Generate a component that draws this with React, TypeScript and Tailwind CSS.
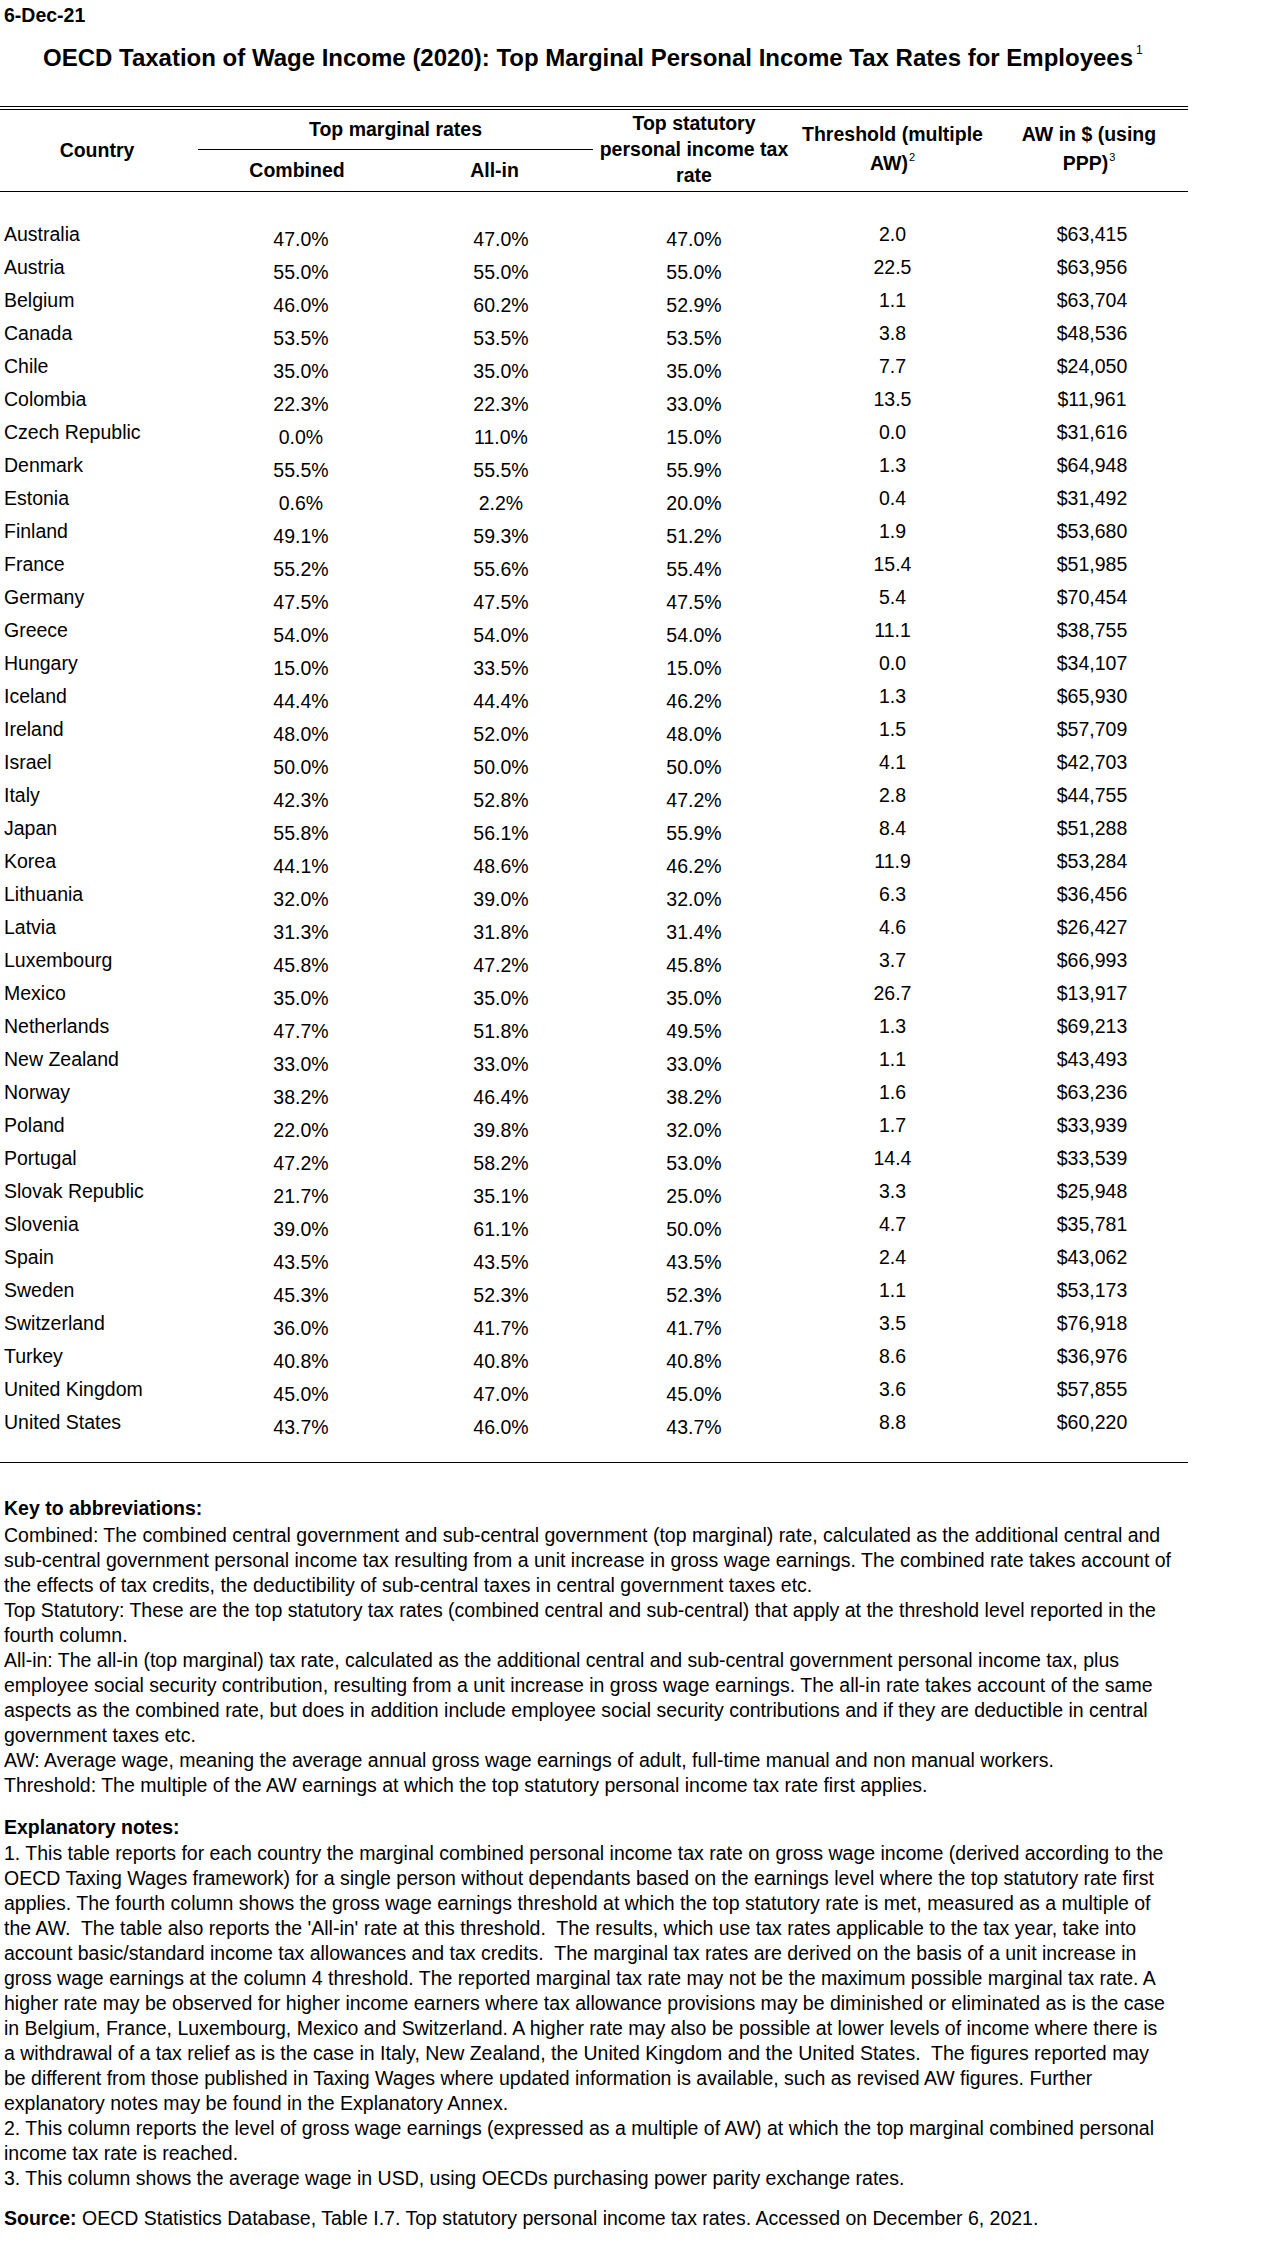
import React from "react";

type Row = [string, string, string, string, string, string];

const rows: Row[] = [
  ["Australia", "47.0%", "47.0%", "47.0%", "2.0", "$63,415"],
  ["Austria", "55.0%", "55.0%", "55.0%", "22.5", "$63,956"],
  ["Belgium", "46.0%", "60.2%", "52.9%", "1.1", "$63,704"],
  ["Canada", "53.5%", "53.5%", "53.5%", "3.8", "$48,536"],
  ["Chile", "35.0%", "35.0%", "35.0%", "7.7", "$24,050"],
  ["Colombia", "22.3%", "22.3%", "33.0%", "13.5", "$11,961"],
  ["Czech Republic", "0.0%", "11.0%", "15.0%", "0.0", "$31,616"],
  ["Denmark", "55.5%", "55.5%", "55.9%", "1.3", "$64,948"],
  ["Estonia", "0.6%", "2.2%", "20.0%", "0.4", "$31,492"],
  ["Finland", "49.1%", "59.3%", "51.2%", "1.9", "$53,680"],
  ["France", "55.2%", "55.6%", "55.4%", "15.4", "$51,985"],
  ["Germany", "47.5%", "47.5%", "47.5%", "5.4", "$70,454"],
  ["Greece", "54.0%", "54.0%", "54.0%", "11.1", "$38,755"],
  ["Hungary", "15.0%", "33.5%", "15.0%", "0.0", "$34,107"],
  ["Iceland", "44.4%", "44.4%", "46.2%", "1.3", "$65,930"],
  ["Ireland", "48.0%", "52.0%", "48.0%", "1.5", "$57,709"],
  ["Israel", "50.0%", "50.0%", "50.0%", "4.1", "$42,703"],
  ["Italy", "42.3%", "52.8%", "47.2%", "2.8", "$44,755"],
  ["Japan", "55.8%", "56.1%", "55.9%", "8.4", "$51,288"],
  ["Korea", "44.1%", "48.6%", "46.2%", "11.9", "$53,284"],
  ["Lithuania", "32.0%", "39.0%", "32.0%", "6.3", "$36,456"],
  ["Latvia", "31.3%", "31.8%", "31.4%", "4.6", "$26,427"],
  ["Luxembourg", "45.8%", "47.2%", "45.8%", "3.7", "$66,993"],
  ["Mexico", "35.0%", "35.0%", "35.0%", "26.7", "$13,917"],
  ["Netherlands", "47.7%", "51.8%", "49.5%", "1.3", "$69,213"],
  ["New Zealand", "33.0%", "33.0%", "33.0%", "1.1", "$43,493"],
  ["Norway", "38.2%", "46.4%", "38.2%", "1.6", "$63,236"],
  ["Poland", "22.0%", "39.8%", "32.0%", "1.7", "$33,939"],
  ["Portugal", "47.2%", "58.2%", "53.0%", "14.4", "$33,539"],
  ["Slovak Republic", "21.7%", "35.1%", "25.0%", "3.3", "$25,948"],
  ["Slovenia", "39.0%", "61.1%", "50.0%", "4.7", "$35,781"],
  ["Spain", "43.5%", "43.5%", "43.5%", "2.4", "$43,062"],
  ["Sweden", "45.3%", "52.3%", "52.3%", "1.1", "$53,173"],
  ["Switzerland", "36.0%", "41.7%", "41.7%", "3.5", "$76,918"],
  ["Turkey", "40.8%", "40.8%", "40.8%", "8.6", "$36,976"],
  ["United Kingdom", "45.0%", "47.0%", "45.0%", "3.6", "$57,855"],
  ["United States", "43.7%", "46.0%", "43.7%", "8.8", "$60,220"],
];

const keyLines = [
  "Combined: The combined central government and sub-central government (top marginal) rate, calculated as the additional central and",
  "sub-central government personal income tax resulting from a unit increase in gross wage earnings. The combined rate takes account of",
  "the effects of tax credits, the deductibility of sub-central taxes in central government taxes etc.",
  "Top Statutory: These are the top statutory tax rates (combined central and sub-central) that apply at the threshold level reported in the",
  "fourth column.",
  "All-in: The all-in (top marginal) tax rate, calculated as the additional central and sub-central government personal income tax, plus",
  "employee social security contribution, resulting from a unit increase in gross wage earnings. The all-in rate takes account of the same",
  "aspects as the combined rate, but does in addition include employee social security contributions and if they are deductible in central",
  "government taxes etc.",
  "AW: Average wage, meaning the average annual gross wage earnings of adult, full-time manual and non manual workers.",
  "Threshold: The multiple of the AW earnings at which the top statutory personal income tax rate first applies.",
];

const noteLines = [
  "1. This table reports for each country the marginal combined personal income tax rate on gross wage income (derived according to the",
  "OECD Taxing Wages framework) for a single person without dependants based on the earnings level where the top statutory rate first",
  "applies. The fourth column shows the gross wage earnings threshold at which the top statutory rate is met, measured as a multiple of",
  "the AW.  The table also reports the 'All-in' rate at this threshold.  The results, which use tax rates applicable to the tax year, take into",
  "account basic/standard income tax allowances and tax credits.  The marginal tax rates are derived on the basis of a unit increase in",
  "gross wage earnings at the column 4 threshold. The reported marginal tax rate may not be the maximum possible marginal tax rate. A",
  "higher rate may be observed for higher income earners where tax allowance provisions may be diminished or eliminated as is the case",
  "in Belgium, France, Luxembourg, Mexico and Switzerland. A higher rate may also be possible at lower levels of income where there is",
  "a withdrawal of a tax relief as is the case in Italy, New Zealand, the United Kingdom and the United States.  The figures reported may",
  "be different from those published in Taxing Wages where updated information is available, such as revised AW figures. Further",
  "explanatory notes may be found in the Explanatory Annex.",
  "2. This column reports the level of gross wage earnings (expressed as a multiple of AW) at which the top marginal combined personal",
  "income tax rate is reached.",
  "3. This column shows the average wage in USD, using OECDs purchasing power parity exchange rates.",
];

export default function App() {
  return (
    <div className="w-[1285px] min-h-[2262px] bg-white text-black font-['Liberation_Sans',Arial,sans-serif] text-[19.5px]">
      <div className="pt-[4px] pl-[4px] font-bold leading-[22px]">6-Dec-21</div>
      <h1 className="mt-[18px] pl-[43px] text-[24px] font-bold leading-[28px] whitespace-nowrap">
        OECD Taxation of Wage Income (2020): Top Marginal Personal Income Tax Rates for Employees
        <sup className="text-[12px] font-normal top-[-12px] ml-[3px]">1</sup>
      </h1>

      <div className="mt-[34px] w-[1188px]">
        <div className="h-px bg-black" />
        <div className="mt-[2px] h-px bg-black" />

        <div className="flex h-[81px] font-bold whitespace-nowrap">
          <div className="w-[198px] flex items-center justify-center pr-[4px]">Country</div>
          <div className="w-[395px] flex flex-col">
            <div className="h-[39px] flex items-center justify-center">Top marginal rates</div>
            <div className="h-px bg-black" />
            <div className="flex flex-1">
              <div className="w-[198px] flex items-center justify-center">Combined</div>
              <div className="flex-1 flex items-center justify-center">All-in</div>
            </div>
          </div>
          <div className="w-[202px] flex items-center justify-center text-center leading-[26px] pb-[3px]">
            <div>
              Top statutory
              <br />
              personal income tax
              <br />
              rate
            </div>
          </div>
          <div className="w-[195px] flex items-center justify-center text-center leading-[29px] pb-[4px]">
            <div>
              Threshold (multiple
              <br />
              AW)
              <sup className="text-[11px] font-normal top-[-9px] ml-[1px]">2</sup>
            </div>
          </div>
          <div className="w-[198px] flex items-center justify-center text-center leading-[29px] pb-[4px]">
            <div>
              AW in $ (using
              <br />
              PPP)
              <sup className="text-[11px] font-normal top-[-9px] ml-[1px]">3</sup>
            </div>
          </div>
        </div>
        <div className="h-px bg-black" />

        <div className="pt-[26px]">
          {rows.map((r) => (
            <div key={r[0]} className="flex h-[33px] leading-[33px] whitespace-nowrap">
              <div className="w-[198px] pl-[4px]">{r[0]}</div>
              <div className="w-[198px] pl-[8px] pt-[5px] text-center">{r[1]}</div>
              <div className="w-[197px] pl-[13px] pt-[5px] text-center">{r[2]}</div>
              <div className="w-[202px] pt-[5px] text-center">{r[3]}</div>
              <div className="w-[195px] text-center">{r[4]}</div>
              <div className="w-[198px] pl-[6px] text-center">{r[5]}</div>
            </div>
          ))}
        </div>

        <div className="mt-[23px] h-px bg-black" />
      </div>

      <div className="pl-[4px] mt-[33px] leading-[25px]">
        <div className="font-bold">Key to abbreviations:</div>
        <div className="mt-[2px]">
          {keyLines.map((l, i) => (
            <div key={i} className="whitespace-pre">{l}</div>
          ))}
        </div>
        <div className="mt-[17px] font-bold">Explanatory notes:</div>
        <div className="mt-[1px]">
          {noteLines.map((l, i) => (
            <div key={i} className="whitespace-pre">{l}</div>
          ))}
        </div>
        <div className="mt-[15px] whitespace-pre">
          <span className="font-bold">Source:</span> OECD Statistics Database, Table I.7. Top statutory personal income tax rates. Accessed on December 6, 2021.
        </div>
      </div>
    </div>
  );
}
